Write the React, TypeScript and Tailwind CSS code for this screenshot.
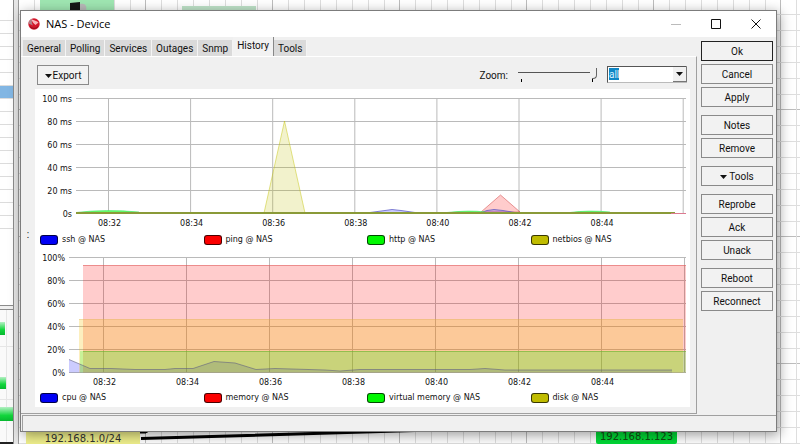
import React, { useState } from 'react';
import clsx from 'clsx';

const tabs = ['General', 'Polling', 'Services', 'Outages', 'Snmp', 'History', 'Tools'];

const actionGroups = [
  ['Ok', 'Cancel', 'Apply'],
  ['Notes', 'Remove'],
  ['Tools'],
  ['Reprobe', 'Ack', 'Unack'],
  ['Reboot', 'Reconnect'],
];

const times = ['08:32', '08:34', '08:36', '08:38', '08:40', '08:42', '08:44'];

const swatches = ['bg-[#0000f5]', 'bg-[#fb0000]', 'bg-[#00f800]', 'bg-[#c0bc00]'];

const range = (n: number) => Array.from({ length: n }, (_, i) => i);

const DownArrow: React.FC = () => (
  <svg viewBox="0 0 7 4" className="h-1 w-[7px] shrink-0" aria-hidden="true">
    <path d="M0 0h7L3.5 4z" fill="#111" />
  </svg>
);

const MapGrid: React.FC = () => (
  <svg className="absolute inset-0 size-full" aria-hidden="true">
    <defs>
      <pattern id="grid" x="126" y="-18" width="127" height="127" patternUnits="userSpaceOnUse">
        {range(8).map((i) => (
          <path
            key={i}
            d={`M${i * 16 + 0.5} 0V128M0 ${i * 16 + 0.5}H128`}
            stroke={i === 0 ? '#bdbdbd' : '#dedede'}
          />
        ))}
      </pattern>
    </defs>
    <rect width="100%" height="100%" fill="url(#grid)" />
  </svg>
);

const DeviceList: React.FC = () => (
  <div className="relative flex w-[14px] shrink-0 flex-col border-r border-[#8c8c8c] bg-white">
    <div className="h-[306px] shrink-0 overflow-hidden border-b border-[#8c8c8c]">
      {range(17).map((i) => (
        <div
          key={i}
          className={clsx('h-[13px] border-b border-[#dcdcdc]', i === 6 && 'bg-[#82b6e3]', i === 0 && 'mt-[8px]')}
        />
      ))}
    </div>
    <div className="h-[3px] shrink-0 bg-[#f0f0f0]" />
    <div className="relative grow overflow-hidden border-t border-[#8c8c8c] bg-[#fafafa]">
      <svg width="14" height="200" aria-hidden="true">
        <defs>
          <linearGradient id="node" x1="0" x2="0" y1="0" y2="1">
            <stop offset="0" stopColor="#b4f0c4" />
            <stop offset="0.6" stopColor="#12d63c" />
            <stop offset="1" stopColor="#08b830" />
          </linearGradient>
        </defs>
        <path d="M0 36.500H14M0 89.500H14M6.500 0V134" stroke="#e6e6e6" />
        <rect y="12" width="5" height="13" fill="url(#node)" />
        <rect y="67" width="6" height="12" fill="url(#node)" />
        <rect y="97" width="14" height="14" fill="url(#node)" />
        <path d="M0 133H14" stroke="#222" strokeWidth="2" />
      </svg>
    </div>
  </div>
);

const MapCanvas: React.FC = () => (
  <div className="relative grow overflow-hidden bg-white">
    <MapGrid />
  </div>
);

// nodes and links pinned on the network map behind the dialog
const MapNodes: React.FC = () => (
  <div className="absolute inset-0 overflow-hidden font-['DejaVu_Sans',sans-serif] text-[10px] leading-none">
    <div className="absolute top-0 left-[40px] h-4 w-[74px] bg-[#9fe6b2]">
      <svg width="74" height="12" aria-hidden="true">
        <path d="M30 3l10-1v10H30z" fill="#161616" />
        <path d="M40 4c6-1 7 2 6 8h-6z" fill="#b9b9b9" />
      </svg>
    </div>
    <div className="absolute top-[6px] left-[182px] h-3 w-[74px] bg-[#bfe3c8]" />
    <svg className="absolute top-[426px] left-[140px] h-[18px] w-[300px]" aria-hidden="true">
      <path d="M-1 6h7v1M1 12.500L292 4" stroke="#000" strokeWidth="3" fill="none" />
    </svg>
    <div className="absolute top-[426px] left-[26px] flex h-[18px] w-[114px] items-end justify-center bg-[#f0f08c] text-[#333]">
      192.168.1.0/24
    </div>
    <div className="absolute top-[424px] left-[596px] h-5 w-[81px] rounded-b-xs bg-[#00d936] pt-2 text-center text-[#124a12]">
      192.168.1.123
    </div>
  </div>
);

interface ChartProps {
  height: number;
  top: number;
  left: number;
  labels: string[];
  firstTick: number;
  pitch: number;
  children: React.ReactNode;
}

const Chart: React.FC<ChartProps> = ({ height, top, left, labels, firstTick, pitch, children }) => (
  <svg viewBox={`0 0 655 ${height}`} className="block w-full font-['DejaVu_Sans',sans-serif] text-[8px]">
    {labels.map((label, i) => (
      <g key={label}>
        <path d={`M${left} ${top + i * 23}H651`} stroke="#bababa" />
        <text x={left - 4} y={top + i * 23 + 3} textAnchor="end" fill="#111">
          {label}
        </text>
      </g>
    ))}
    {range(8).map((i) => (
      <path key={i} d={`M${firstTick + i * pitch} ${top}v115`} stroke="#bababa" />
    ))}
    {times.map((time, i) => (
      <text key={time} x={firstTick + 1 + i * pitch} y={top + 127} textAnchor="middle" fill="#111">
        {time}
      </text>
    ))}
    {children}
  </svg>
);

const Legend: React.FC<{ items: string[] }> = ({ items }) => (
  <ul className="grid h-[14px] grid-cols-4 gap-1 pl-[5px] font-['DejaVu_Sans',sans-serif] text-[8px] leading-[14px] text-[#111]">
    {items.map((item, i) => (
      <li key={item} className="flex items-center gap-1 whitespace-nowrap">
        <span className={clsx('h-[10px] w-[18px] rounded-[3px] border border-black/70', swatches[i])} />
        {item} @ NAS
      </li>
    ))}
  </ul>
);

const LatencyChart: React.FC = () => (
  <Chart height={144} top={9.5} left={41} firstTick={73.5} pitch={82.1} labels={['100 ms', '80 ms', '60 ms', '40 ms', '20 ms', '0s']}>
    <path d="M229 124L249.500 32L270 124z" fill="#c0c000" fillOpacity=".2" stroke="#c0c000" strokeOpacity=".45" />
    <path d="M446 123L465.500 106L485 123z" fill="#f00" fillOpacity=".2" stroke="#d04040" strokeOpacity=".5" />
    <path d="M335 123.500L350 121.500L357 120.500L366 121.500L380 123.500M446 123.500L452 121.500L459 120.500L468 121.500L480 123.500" fill="#00f" fillOpacity=".2" stroke="#5050c0" strokeOpacity=".7" />
    <path d="M41 123.500Q70 120 104 123M412 123.500Q435 121 450 123M535 123.500Q553 121 575 123" fill="#6f6" stroke="#4fe66f" strokeOpacity=".7" />
    <path d="M41 124H640" stroke="#8a9a38" strokeWidth="2" />
    <path d="M636 124.500H651" stroke="#dc7a90" />
  </Chart>
);

const UsageChart: React.FC = () => (
  <Chart height={142} top={8.5} left={34} firstTick={68.5} pitch={83} labels={['100%', '80%', '60%', '40%', '20%', '0%']}>
    <path d="M34 123.500V110.500L55 119.500L76 119.500L100 120.500L130 120.500L140 119.500H158L179 112.500L200 114L221 120.500L240 119.500L290 121L305 122L325 120.500H435L450 119.500L470 121H637V123.500z" fill="#00f" fillOpacity=".2" />
    <path d="M48 16H651V123.500H48z" fill="#f00" fillOpacity=".2" />
    <path d="M44 70.500H648V123.500H44z" fill="#f3c000" fillOpacity=".25" />
    <path d="M45 102H651V123.500H45z" fill="#0f0" fillOpacity=".2" />
    <path d="M48 16.500H651" stroke="#e06060" strokeOpacity=".6" />
    <path d="M44 70.500H648" stroke="#e0b040" strokeOpacity=".4" />
    <path d="M48 102.500H651" stroke="#70b030" strokeOpacity=".6" />
    <path d="M34 110.500L55 119.500L76 119.500L100 120.500L130 120.500L140 119.500H158L179 112.500L200 114L221 120.500L240 119.500L290 121L305 122L325 120.500H435L450 119.500L470 121H637" fill="none" stroke="#606080" strokeOpacity=".6" />
  </Chart>
);

const TitleBar: React.FC = () => (
  <header className="flex h-[26px] items-center bg-white pl-[7px]">
    <svg viewBox="0 0 12 12" className="size-3" aria-hidden="true">
      <circle cx="6" cy="6" r="5.700" fill="#d3172b" />
      <path d="M.5 5.500A5.500 5.500 0 0 1 4.500 .8C3.500 2.500 3.500 5 5 7.500z" fill="#b07f88" />
      <path d="M3.500 1.500C6 2 9 3 10.500 4.500L7.500 7C5.500 5.500 4 3.500 3.500 1.500z" fill="#f9b4ba" />
      <path d="M2 8.500c2 2.500 6 2.500 8 0" stroke="#8e0d1c" fill="none" />
    </svg>
    <h1 className="ml-[6px] grow font-['Open_Sans',sans-serif] text-[11px] leading-4 text-black">NAS - Device</h1>
    <button type="button" aria-label="Minimize" className="flex h-full w-10 items-center justify-center">
      <svg width="10" height="10" aria-hidden="true">
        <path d="M0 5.500H10" stroke="#bbb" />
      </svg>
    </button>
    <button type="button" aria-label="Maximize" className="flex h-full w-10 items-center justify-center">
      <svg width="10" height="10" aria-hidden="true">
        <path d="M.5 .5h9v9h-9z" stroke="#111" fill="none" />
      </svg>
    </button>
    <button type="button" aria-label="Close" className="flex h-full w-10 items-center justify-center">
      <svg width="10" height="10" aria-hidden="true">
        <path d="M.5 .5l9 9M9.500 .5l-9 9" stroke="#111" fill="none" />
      </svg>
    </button>
  </header>
);

const Toolbar: React.FC = () => {
  const [zoom, setZoom] = useState(100);

  return (
    <div className="flex h-8 items-center pt-[6px] pb-[3px] pr-[9px] pl-4">
      <button type="button" className="flex h-5 w-[52px] items-center justify-center gap-px border border-[#8a8a8a] bg-[#f2f2f2] pt-[2px]">
        <DownArrow />
        Export
      </button>
      <label htmlFor="zoom" className="ml-auto pt-[2px]">
        Zoom:
      </label>
      <div className="ml-[10px] w-[79px]">
        <input
          id="zoom"
          type="range"
          value={zoom}
          onChange={(e) => setZoom(Number(e.target.value))}
          className="block h-[11px] w-full appearance-none bg-transparent bg-[linear-gradient(#555,#555)] bg-[length:72px_1px] bg-[position:0_4px] bg-no-repeat [&::-webkit-slider-thumb]:h-[11px] [&::-webkit-slider-thumb]:w-[5px] [&::-webkit-slider-thumb]:appearance-none [&::-webkit-slider-thumb]:rounded-br-sm [&::-webkit-slider-thumb]:border-r [&::-webkit-slider-thumb]:border-b [&::-webkit-slider-thumb]:border-[#666]"
        />
        <div className="flex justify-between pr-1 pl-[3px]">
          <span className="h-[3px] w-px bg-black" />
          <span className="h-[3px] w-px bg-black" />
        </div>
      </div>
      <div className="relative ml-[10px] h-[17px] w-20">
        <select
          aria-label="Zoom range"
          defaultValue="all"
          className="block h-full w-full appearance-none border border-t-[#555] border-r-[#bbb] border-b-[#bbb] border-l-[#555] bg-white bg-[linear-gradient(#0f86c4,#0f86c4)] bg-[length:10px_12px] bg-[position:1px_1px] bg-no-repeat pl-px leading-[14px] text-[#d8f0ff]"
        >
          <option value="all">all</option>
        </select>
        <span className="pointer-events-none absolute top-px right-0 flex h-[15px] w-[14px] items-center justify-center border-r border-b border-[#777] bg-[#f0f0f0]">
          <DownArrow />
        </span>
      </div>
    </div>
  );
};

const App: React.FC = () => {
  const [active, setActive] = useState('History');

  return (
    <div className="relative flex h-screen min-h-[444px] overflow-hidden bg-white font-[Roboto,sans-serif] text-[10px] leading-4 text-[#111]">
      <DeviceList />
      <div className="w-[5px] shrink-0 border-r border-[#9a9a9a] bg-[#e6e6e6]" />
      <MapCanvas />
      <MapNodes />

      <div role="dialog" aria-label="NAS - Device" className="absolute top-[10px] right-[23px] left-[20px] border border-[#7c7c7c] bg-[#f0f0f0] shadow-[2px_3px_12px_rgba(0,0,0,0.4)]">
        <TitleBar />
        <div className="flex">
          <main className="min-w-0 grow">
            <nav role="tablist" className="flex h-[19px] items-end pl-[2px]">
              {tabs.map((tab) => (
                <button
                  key={tab}
                  type="button"
                  role="tab"
                  aria-selected={tab === active}
                  onClick={() => setActive(tab)}
                  className={clsx(
                    'flex items-center border-r px-1',
                    tab === active
                      ? 'h-[19px] border-[#888] bg-[#f2f2f2] pb-px'
                      : 'h-4 border-[#f4f4f4] bg-[#dadada] pt-px',
                  )}
                >
                  {tab}
                </button>
              ))}
            </nav>
            <div className="border-t border-r border-b border-t-white border-r-[#a0a0a0] border-b-[#a0a0a0] pb-[6px]">
              <Toolbar />
              <div className="flex pr-[6px]">
                <div className="w-[14px] shrink-0 pt-[138px] text-center">:</div>
                <div className="grow bg-white pb-[2px]">
                  <LatencyChart />
                  <Legend items={['ssh', 'ping', 'http', 'netbios']} />
                  <div className="h-[2px]" />
                  <UsageChart />
                  <Legend items={['cpu', 'memory', 'virtual memory', 'disk']} />
                </div>
              </div>
            </div>
          </main>
          <aside className="flex w-[79px] shrink-0 flex-col gap-2 pt-1 pr-[3px] pl-1">
            {actionGroups.map((group) => (
              <div key={group[0]} className="flex flex-col gap-[3px]">
                {group.map((action) => (
                  <button
                    key={action}
                    type="button"
                    className={clsx(
                      'flex h-5 items-center justify-center gap-[2px] border bg-[#f2f2f2] pt-[2px]',
                      action === 'Ok' ? 'border-[#222]' : 'border-[#8a8a8a]',
                    )}
                  >
                    {action === 'Tools' && <DownArrow />}
                    {action}
                  </button>
                ))}
              </div>
            ))}
          </aside>
        </div>
        <footer className="mt-px ml-px h-4 border-t border-l border-[#a0a0a0]" />
      </div>
    </div>
  );
};

export default App;
